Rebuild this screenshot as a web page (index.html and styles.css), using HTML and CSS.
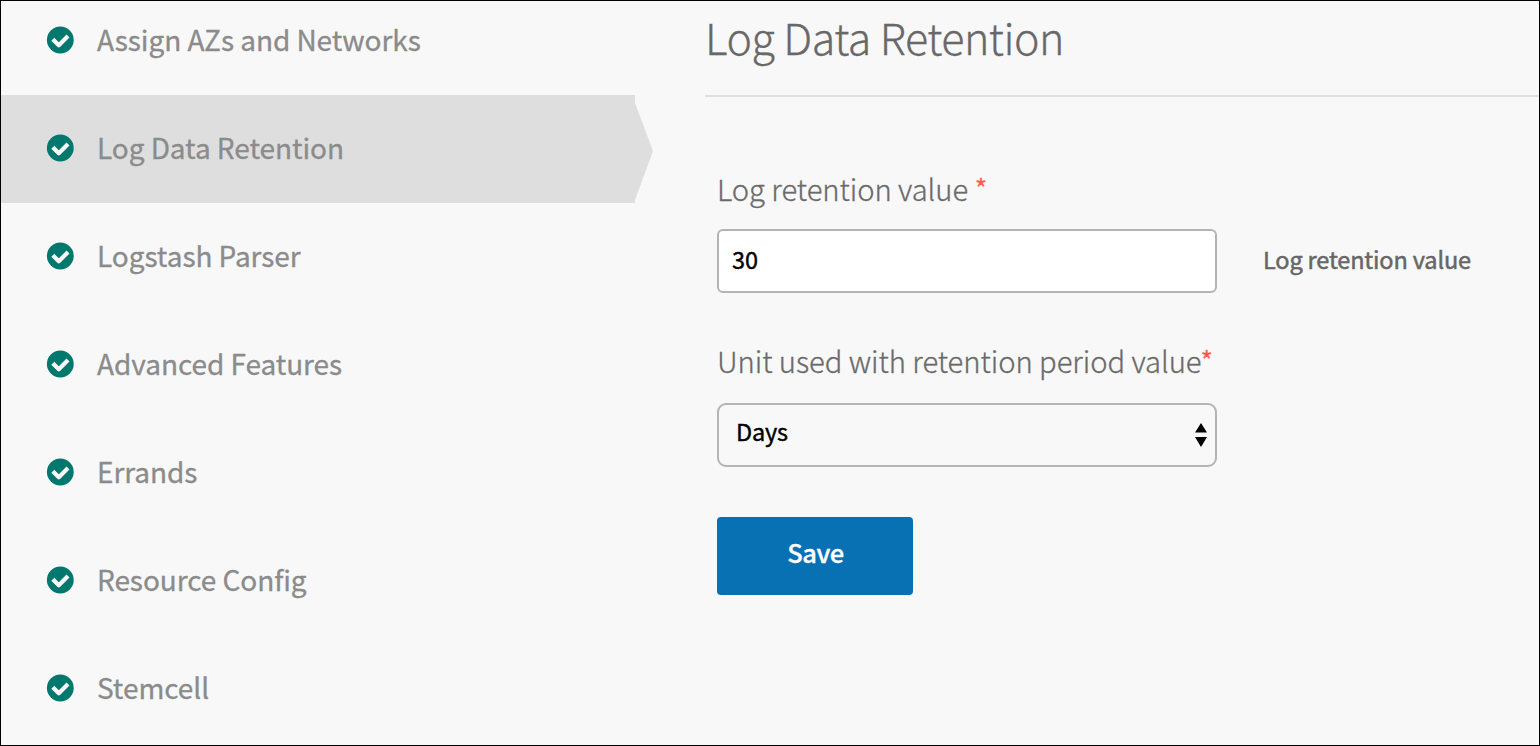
FILE: index.html
```html
<!DOCTYPE html>
<html lang="en">
<head>
<meta charset="utf-8">
<title>Log Data Retention</title>
<link rel="stylesheet" href="styles.css">
</head>
<body>
<svg class="defs" width="0" height="0"><defs><symbol id="check" viewBox="0 0 28 28"><circle cx="14.3" cy="14" r="13.4" fill="#00786d"/><path d="M6.8 13.3l6 6 9.2-9.2" fill="none" stroke="#f8f8f8" stroke-width="4.2" stroke-linejoin="round"/></symbol></defs></svg>
<div class="app">
  <nav class="sidebar">
    <a class="item"><svg class="icon"><use href="#check"/></svg><span class="name">Assign AZs and Networks</span></a>
    <a class="item active"><svg class="icon"><use href="#check"/></svg><span class="name">Log Data Retention</span><svg class="arrow" viewBox="0 0 18 108"><path d="M0 8L18 56L0 105Z" fill="#dedede"/></svg></a>
    <a class="item"><svg class="icon"><use href="#check"/></svg><span class="name">Logstash Parser</span></a>
    <a class="item"><svg class="icon"><use href="#check"/></svg><span class="name">Advanced Features</span></a>
    <a class="item"><svg class="icon"><use href="#check"/></svg><span class="name">Errands</span></a>
    <a class="item"><svg class="icon"><use href="#check"/></svg><span class="name">Resource Config</span></a>
    <a class="item"><svg class="icon"><use href="#check"/></svg><span class="name">Stemcell</span></a>
  </nav>
  <main class="content">
    <h1 class="title">Log Data Retention</h1>
    <form class="form">
      <label class="label">Log retention value <span class="req">*</span></label>
      <div class="row"><div class="input">30</div><p class="help">Log retention value</p></div>
      <label class="label second">Unit used with retention period value<span class="req">*</span></label>
      <div class="select"><span class="value">Days</span><svg class="carets" viewBox="0 0 12 24"><path d="M6 0L12 9.5H0ZM6 24L0 14h12Z"/></svg></div>
      <button class="save" type="button">Save</button>
    </form>
  </main>
</div>
</body>
</html>
```
FILE: styles.css
```css
* { box-sizing: border-box; }
body { margin: 0; font-family: "Noto Sans CJK SC", sans-serif; }
.defs { position: absolute; }
.app { display: flex; width: 1540px; height: 746px; overflow: hidden; border: 1px solid #000; background: #f8f8f8; }
.sidebar { width: 634px; flex: none; margin-top: -14px; }
.item { position: relative; display: flex; align-items: center; height: 108px; padding-left: 45px; font-size: 28px; line-height: 44px; font-weight: 400; letter-spacing: -0.06px; color: #8b8b8b; white-space: nowrap; -webkit-text-stroke: 0.3px; }
.name { padding-bottom: 4px; }
.active { background: #dedede; }
.icon { width: 28px; height: 28px; margin: 0 23px 2px 0; }
.arrow { position: absolute; left: 634px; top: 0; width: 18px; height: 108px; }
.content { flex: 1; padding-left: 70px; }
.title { margin: 0; height: 96px; padding-top: 2px; border-bottom: 2px solid #e0e0e0; font-size: 43px; line-height: 66px; font-weight: 300; letter-spacing: -0.5px; color: #686868; -webkit-text-stroke: 0.3px; }
.form { padding: 68px 0 0 12px; }
.label { display: block; height: 46px; font-size: 29.2px; line-height: 46px; font-weight: 300; letter-spacing: -0.05px; color: #6a6a6a; white-space: nowrap; -webkit-text-stroke: 0.3px; }
.req { color: #ff5a50; -webkit-text-stroke: 0.5px; }
.row { display: flex; align-items: center; margin-top: 18px; }
.input { width: 500px; height: 64px; padding: 0 13px; border: 2px solid #b4b4b4; border-radius: 6px; background: #fff; color: #000; font-size: 23.5px; line-height: 56px; -webkit-text-stroke: 0.4px; }
.help { margin: 0 0 0 46px; padding-bottom: 4px; font-size: 23.5px; font-weight: 400; letter-spacing: -0.15px; color: #666; white-space: nowrap; -webkit-text-stroke: 0.5px; }
.second { margin-top: 44px; }
.select { display: flex; justify-content: space-between; align-items: center; width: 500px; height: 64px; margin-top: 20px; padding: 0 8px 0 17px; border: 2px solid #b4b4b4; border-radius: 9px; font-size: 23.5px; letter-spacing: -0.2px; color: #000; }
.value { padding-bottom: 8px; -webkit-text-stroke: 0.4px; }
.carets { width: 12px; height: 24px; }
.save { display: block; width: 196px; height: 78px; margin-top: 50px; padding: 0 0 8px 1px; border: 0; border-radius: 4px; background: #0871b4; color: #fff; font: 500 25.5px/66px "Noto Sans CJK SC", sans-serif; letter-spacing: -0.4px; -webkit-text-stroke: 0.3px; }
```
